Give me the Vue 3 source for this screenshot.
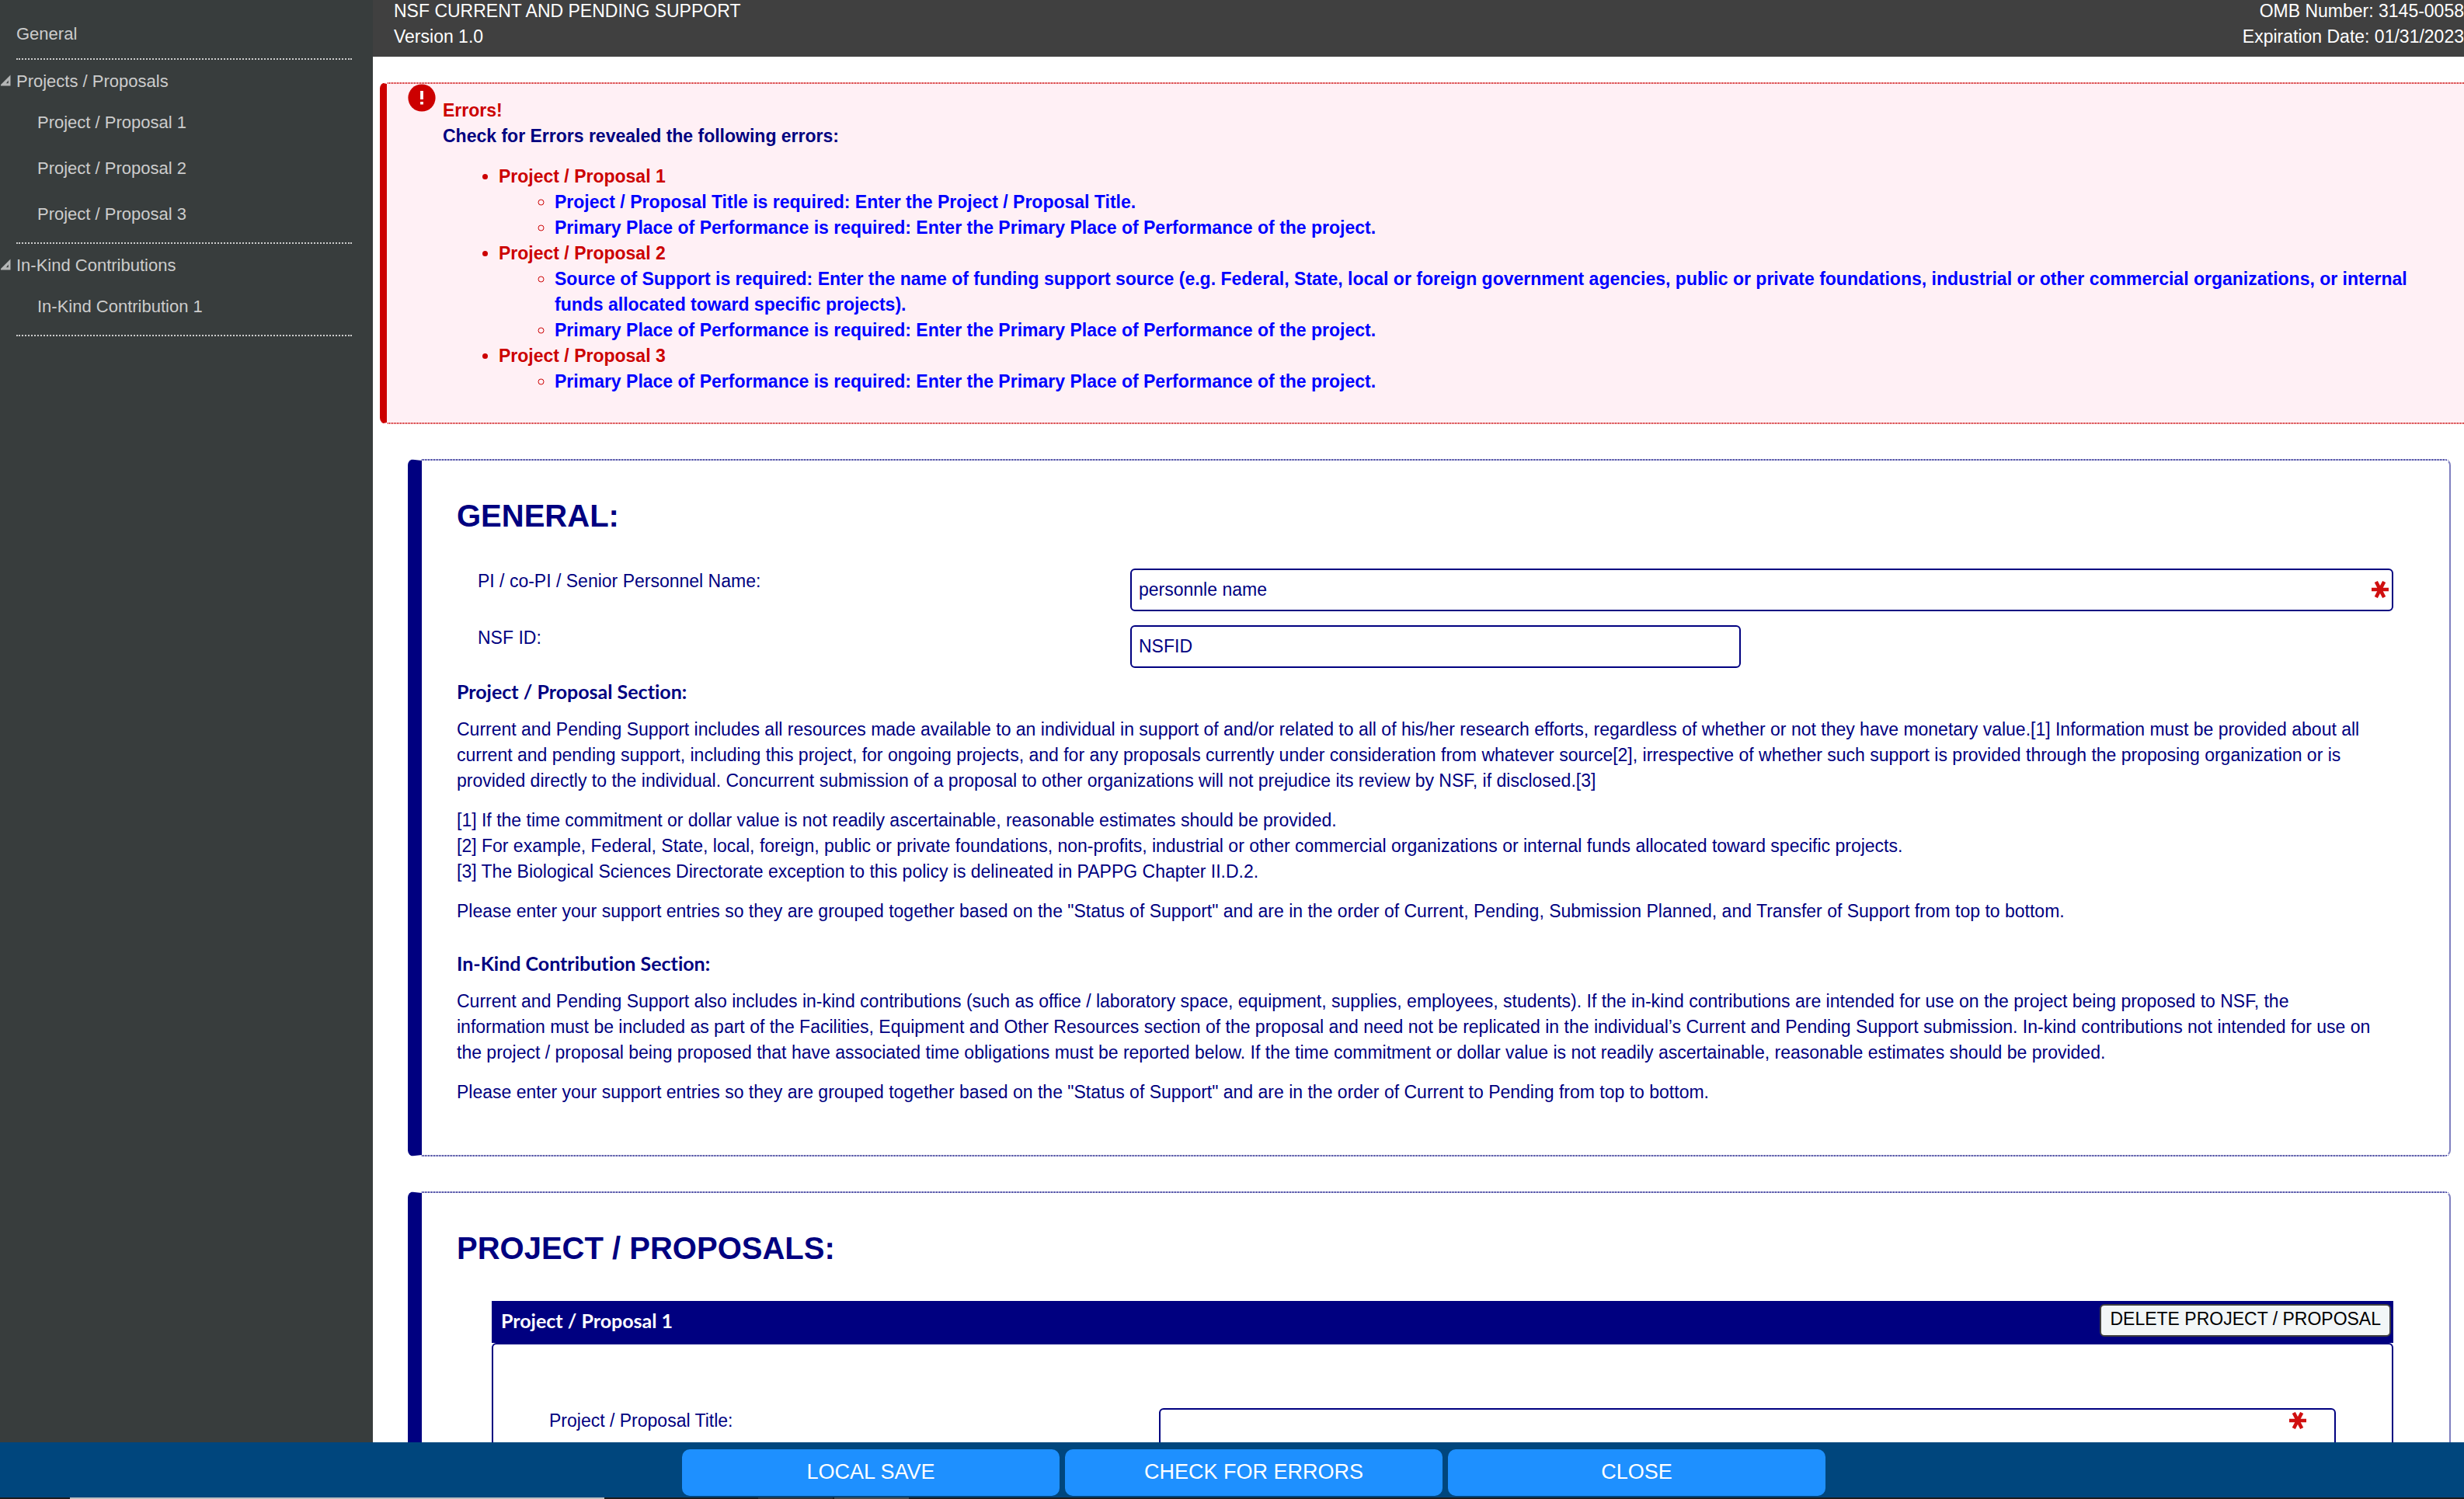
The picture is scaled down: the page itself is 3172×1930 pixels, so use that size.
<script setup>
const navGroups = [
  { title: 'Projects / Proposals', items: ['Project / Proposal 1', 'Project / Proposal 2', 'Project / Proposal 3'] },
  { title: 'In-Kind Contributions', items: ['In-Kind Contribution 1'] },
]

const placeError = 'Primary Place of Performance is required: Enter the Primary Place of Performance of the project.'

const errorGroups = [
  {
    title: 'Project / Proposal 1',
    messages: ['Project / Proposal Title is required: Enter the Project / Proposal Title.', placeError],
  },
  {
    title: 'Project / Proposal 2',
    messages: [
      'Source of Support is required: Enter the name of funding support source (e.g. Federal, State, local or foreign government agencies, public or private foundations, industrial or other commercial organizations, or internal funds allocated toward specific projects).',
      placeError,
    ],
  },
  { title: 'Project / Proposal 3', messages: [placeError] },
]
</script>

<template>
  <div class="page">
    <div class="workspace">
      <nav class="sidebar">
        <div class="nav-block">
          <a class="nav-link" href="#general">General</a>
        </div>
        <div v-for="group in navGroups" :key="group.title" class="nav-block">
          <a class="nav-link nav-title" href="#">
            <svg class="caret" viewBox="0 0 14 16" aria-hidden="true">
              <path d="M0 13 L12.5 0.5 V14.5 H0 Z M7 11.2 H9.8 V7.4 Z" fill="#b4b6b6" fill-rule="evenodd" />
            </svg>
            {{ group.title }}
          </a>
          <ul class="nav-items">
            <li v-for="item in group.items" :key="item"><a class="nav-link" href="#">{{ item }}</a></li>
          </ul>
        </div>
      </nav>

      <main class="content">
        <header class="topbar">
          <div>NSF CURRENT AND PENDING SUPPORT<br />Version 1.0</div>
          <div class="topbar-right">OMB Number: 3145-0058<br />Expiration Date: 01/31/2023</div>
        </header>

        <section class="errors">
          <svg class="error-icon" viewBox="0 0 36 36" aria-hidden="true">
            <circle cx="18" cy="18" r="17.6" fill="#c00" />
            <path d="M16.1 9 H19.9 V20 H16.1 Z M16.1 23 H19.9 V26.6 H16.1 Z" fill="#fff" />
          </svg>
          <div class="errors-title">Errors!</div>
          <div class="errors-intro">Check for Errors revealed the following errors:</div>
          <ul class="error-list">
            <li v-for="group in errorGroups" :key="group.title">
              {{ group.title }}
              <ul class="error-sublist">
                <li v-for="message in group.messages" :key="message"><a href="#">{{ message }}</a></li>
              </ul>
            </li>
          </ul>
        </section>

        <section id="general" class="panel">
          <h1>GENERAL:</h1>
          <div class="fields">
            <div class="field">
              <label for="pi-name">PI / co-PI / Senior Personnel Name:</label>
              <div class="control">
                <input id="pi-name" type="text" value="personnle name" />
                <svg class="required" viewBox="0 0 22 22" aria-hidden="true">
                  <path d="M0 11 H22 M5.8 1 L16.2 21 M16.2 1 L5.8 21" stroke="#d01010" stroke-width="4.6" />
                </svg>
              </div>
            </div>
            <div class="field">
              <label for="nsf-id">NSF ID:</label>
              <div class="control control-short">
                <input id="nsf-id" type="text" value="NSFID" />
              </div>
            </div>
          </div>

          <h2>Project / Proposal Section:</h2>
          <p>
            Current and Pending Support includes all resources made available to an individual in support of and/or related to all of his/her research efforts, regardless of whether or not they have monetary value.[1] Information must be provided about all current and pending support, including this project, for ongoing projects, and for any proposals currently under consideration from whatever source[2], irrespective of whether such support is provided through the proposing organization or is provided directly to the individual. Concurrent submission of a proposal to other organizations will not prejudice its review by NSF, if disclosed.[3]
          </p>
          <p>
            [1] If the time commitment or dollar value is not readily ascertainable, reasonable estimates should be provided.<br />
            [2] For example, Federal, State, local, foreign, public or private foundations, non-profits, industrial or other commercial organizations or internal funds allocated toward specific projects.<br />
            [3] The Biological Sciences Directorate exception to this policy is delineated in PAPPG Chapter II.D.2.
          </p>
          <p>
            Please enter your support entries so they are grouped together based on the "Status of Support" and are in the order of Current, Pending, Submission Planned, and Transfer of Support from top to bottom.
          </p>

          <h2>In-Kind Contribution Section:</h2>
          <p>
            Current and Pending Support also includes in-kind contributions (such as office / laboratory space, equipment, supplies, employees, students). If the in-kind contributions are intended for use on the project being proposed to NSF, the information must be included as part of the Facilities, Equipment and Other Resources section of the proposal and need not be replicated in the individual’s Current and Pending Support submission. In-kind contributions not intended for use on the project / proposal being proposed that have associated time obligations must be reported below. If the time commitment or dollar value is not readily ascertainable, reasonable estimates should be provided.
          </p>
          <p>
            Please enter your support entries so they are grouped together based on the "Status of Support" and are in the order of Current to Pending from top to bottom.
          </p>
        </section>

        <section class="panel">
          <h1>PROJECT / PROPOSALS:</h1>
          <article class="proposal">
            <div class="proposal-bar">
              <h3>Project / Proposal 1</h3>
              <button type="button" class="delete">DELETE PROJECT / PROPOSAL</button>
            </div>
            <div class="proposal-body">
              <div class="title-field">
                <label for="title-1">Project / Proposal Title:</label>
                <div class="control">
                  <textarea id="title-1" rows="3"></textarea>
                  <svg class="required required-area" viewBox="0 0 22 22" aria-hidden="true">
                    <path d="M0 11 H22 M5.8 1 L16.2 21 M16.2 1 L5.8 21" stroke="#d01010" stroke-width="4.6" />
                  </svg>
                </div>
              </div>
            </div>
          </article>
        </section>
      </main>
    </div>

    <footer class="actions">
      <button type="button">LOCAL SAVE</button>
      <button type="button">CHECK FOR ERRORS</button>
      <button type="button">CLOSE</button>
    </footer>
    <div class="strip" aria-hidden="true">
      <i class="thumb"></i>
      <i class="tab"></i>
      <i class="tab tab-active"></i>
    </div>
  </div>
</template>

<style>
body {
  margin: 0;
}
</style>

<style scoped>
.page {
  display: flex;
  flex-direction: column;
  height: 100vh;
  overflow: hidden;
  background: #fff;
  color: #000080;
  font-family: "Liberation Sans", Arial, sans-serif;
  font-size: 23px;
  line-height: 33px;
}

.page * {
  box-sizing: border-box;
}

.workspace {
  display: flex;
  flex: 1;
  min-height: 0;
}

/* Sidebar */
.sidebar {
  flex: none;
  width: 480px;
  padding: 16px 27px 0 21px;
  background: #383d3d;
  font-size: 22px;
  line-height: 30px;
}

.nav-block {
  padding-top: 13px;
  border-bottom: 2px dotted #ccc;
}

.nav-block:first-child {
  padding-bottom: 16px;
}

.nav-link {
  display: block;
  color: #ccc;
  text-decoration: none;
}

.nav-title {
  position: relative;
}

.caret {
  position: absolute;
  left: -20px;
  top: 6px;
  width: 14px;
  height: 16px;
}

.nav-items {
  display: flex;
  flex-direction: column;
  gap: 29px;
  margin: 0;
  padding: 23px 0 21px 27px;
  list-style: none;
}

/* Main column */
.content {
  flex: 1;
  min-width: 0;
  overflow: hidden;
}

.topbar {
  display: flex;
  justify-content: space-between;
  margin-top: -2px;
  padding: 0 0 9px 27px;
  background: #404040;
  color: #fff;
}

.topbar-right {
  text-align: right;
}

/* Finely dotted top and bottom edges, one pixel on and one off */
.errors,
.panel {
  --edge: #000080;
  border: 2px solid transparent;
  background:
    repeating-linear-gradient(90deg, var(--edge) 0 1px, transparent 1px 2px) top / 100% 2px no-repeat border-box,
    repeating-linear-gradient(90deg, var(--edge) 0 1px, transparent 1px 2px) bottom / 100% 2px no-repeat border-box;
}

.errors {
  --edge: #c00;
  position: relative;
  margin: 33px 0 45px 9px;
  padding: 18px 20px 36px 72px;
  border-left: 9px solid #c00;
  border-right: 0;
  border-radius: 8px 0 0 8px;
  background-color: #fff0f5;
  color: #c00;
  font-weight: bold;
}

.error-icon {
  position: absolute;
  left: 27px;
  top: 0;
  width: 36px;
  height: 36px;
}

.errors-intro {
  color: #000080;
}

.error-list,
.error-sublist {
  margin: 0;
  padding-left: 72px;
}

.error-list {
  margin-top: 19px;
  list-style: disc;
}

.error-sublist {
  list-style: circle;
}

.error-list a {
  color: #00f;
  text-decoration: none;
}

.panel {
  margin: 0 17px 45px 45px;
  padding: 48px 54px 64px 45px;
  border-left: 18px solid #000080;
  border-right: 2px solid #8080c0;
  border-radius: 8px;
}

h1 {
  margin: 0 0 45px;
  font-size: 40px;
  line-height: 46px;
}

h2,
h3 {
  margin: 0;
  font-family: Lato, sans-serif;
  font-size: 25px;
  line-height: 33px;
  font-variant-ligatures: none;
}

h2 {
  margin: 14px 0 16px;
}

p {
  margin: 0 39px 18px 0;
}

p + h2 {
  margin-top: 34px;
}

p:last-child {
  margin-bottom: 0;
}

.fields {
  display: flex;
  flex-direction: column;
  gap: 18px;
  margin: 0 18px 0 27px;
}

.field {
  display: flex;
}

.field label {
  width: 840px;
}

.control {
  position: relative;
  flex: 1;
  display: flex;
}

.control-short {
  flex: none;
  width: 786px;
}

input,
textarea {
  width: 100%;
  height: 55px;
  padding: 0 9px;
  border: 2px solid #000080;
  border-radius: 6px;
  background: #fff;
  color: #000080;
  font: inherit;
}

textarea {
  height: 108px;
  resize: none;
}

.required {
  position: absolute;
  right: 6px;
  top: 16px;
  width: 22px;
  height: 22px;
}

.required-area {
  right: 38px;
  top: 5px;
}

.proposal {
  margin: 0 18px 0 45px;
}

.proposal-bar {
  display: flex;
  align-items: flex-start;
  justify-content: space-between;
  padding: 4px 3px 8px 12px;
  background: #000080;
  color: #fff;
}

h3 {
  padding-top: 5px;
}

.delete {
  height: 42px;
  padding: 0 11px 3px;
  border: 2px solid #404040;
  border-radius: 6px;
  background: #f2f6f7;
  color: #000;
  font: inherit;
}

.proposal-body {
  padding: 82px 72px 60px;
  border: 2px solid #000080;
  border-radius: 6px;
}

.title-field {
  display: flex;
}

.title-field label {
  width: 785px;
}

/* Bottom actions */
.actions {
  display: flex;
  justify-content: center;
  gap: 7px;
  padding: 9px 0 2px 56px;
  background: #00467d;
}

.actions button {
  width: 486px;
  height: 60px;
  padding: 0 0 2px;
  border: 0;
  border-radius: 10px;
  background: #1e90ff;
  color: #fff;
  font: inherit;
  font-size: 27px;
}

.strip {
  display: flex;
  height: 2px;
  padding-left: 90px;
  background: #1c1c1c;
}

.thumb {
  width: 688px;
  margin-right: 198px;
  background: #bfbfbf;
}

.tab {
  width: 96px;
  margin-right: 2px;
  background: #333;
}

.tab-active {
  background: #4a4a4a;
}
</style>
